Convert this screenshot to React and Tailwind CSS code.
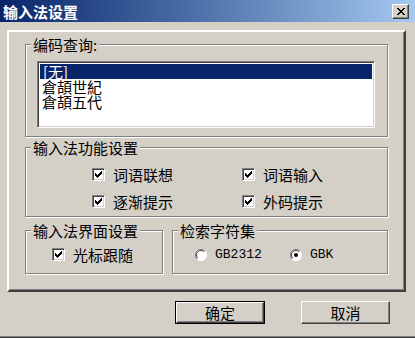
import React from "react";

const CN = "font-['Noto_Sans_CJK_SC','Liberation_Sans',sans-serif]";

function Check() {
    return (
        <span className="relative inline-block w-[13px] h-[13px] bg-white border border-t-[#808080] border-l-[#808080] border-b-white border-r-white shadow-[inset_1px_1px_0_#404040,inset_-1px_-1px_0_#d4d0c8]">
            <svg width="7" height="7" viewBox="0 0 7 7" className="absolute left-[2px] top-[2px]" shapeRendering="crispEdges">
                <path fill="#000" d="M6 0h1v1h-1z M5 1h2v1h-2z M0 2h1v1h-1z M4 2h3v1h-3z M0 3h2v1h-2z M3 3h3v1h-3z M0 4h5v1h-5z M1 5h3v1h-3z M2 6h1v1h-1z" />
            </svg>
        </span>
    );
}

function Radio({ on }) {
    return (
        <svg width="12" height="12" viewBox="0 0 12 12">
            <circle cx="6" cy="6" r="5.5" fill="#fff" />
            <path d="M10 2 A5.5 5.5 0 0 0 2 10" stroke="#808080" strokeWidth="1" fill="none" />
            <path d="M9.2 2.8 A4.5 4.5 0 0 0 2.8 9.2" stroke="#404040" strokeWidth="1" fill="none" />
            <path d="M2 10 A5.5 5.5 0 0 0 10 2" stroke="#ffffff" strokeWidth="1" fill="none" />
            {on && <circle cx="6" cy="6" r="2" fill="#000" />}
        </svg>
    );
}

function Group({ label, className, children }) {
    return (
        <div className={`relative border border-[#808080] shadow-[1px_1px_0_#fff,inset_1px_1px_0_#fff] ${className}`}>
            <span className="absolute -top-[8px] left-[5px] px-[2px] bg-[#d4d0c8] text-[15px] leading-[15px] text-black">{label}</span>
            {children}
        </div>
    );
}

function Item({ label }) {
    return (
        <div className="flex items-center gap-[8px]">
            <Check />
            <span className="text-[15px] leading-[15px] text-black">{label}</span>
        </div>
    );
}

export default function App() {
    return (
        <div className={`w-[415px] h-[338px] bg-[#d4d0c8] flex flex-col overflow-hidden ${CN}`}>
            {/* title bar */}
            <div className="h-[22px] flex items-center justify-between bg-linear-to-r from-[#0a246a] to-[#a6caf0]">
                <span className="pl-[3px] text-white font-bold text-[15px] leading-[15px]">输入法设置</span>
                <button className="mr-[6px] w-[17px] h-[15px] flex items-center justify-center bg-[#d4d0c8] border border-t-white border-l-white border-r-[#404040] border-b-[#404040] shadow-[inset_-1px_-1px_0_#808080]">
                    <svg width="8" height="7" viewBox="0 0 8 7" shapeRendering="crispEdges">
                        <path fill="#000" d="M0 0h2v1h-2z M6 0h2v1h-2z M1 1h2v1h-2z M5 1h2v1h-2z M2 2h4v1h-4z M3 3h2v1h-2z M2 4h4v1h-4z M1 5h2v1h-2z M5 5h2v1h-2z M0 6h2v1h-2z M6 6h2v1h-2z" />
                    </svg>
                </button>
            </div>

            {/* main panel */}
            <div className="ml-[7px] mt-[8px] w-[399px] h-[262px] border-2 border-t-white border-l-white border-r-[#404040] border-b-[#404040] shadow-[inset_-1px_-1px_0_#808080] px-[16px] pt-[12px] flex flex-col">
                <Group label="编码查询:" className="h-[93px] pt-[16px] pl-[11px] pr-[12px]">
                    <div className="h-[67px] bg-white border border-t-[#808080] border-l-[#808080] border-b-white border-r-white shadow-[inset_1px_1px_0_#404040,inset_-1px_-1px_0_#d4d0c8] p-[2px] text-[15px] leading-[15px] text-black">
                        <div className="bg-[#0a246a] text-white pl-[3px] h-[15px]">[无]</div>
                        <div className="pl-[2px] h-[15px]">倉頡世紀</div>
                        <div className="pl-[2px] h-[15px]">倉頡五代</div>
                    </div>
                </Group>

                <Group label="输入法功能设置" className="mt-[10px] h-[70px] pt-[19px] pl-[66px]">
                    <div className="grid grid-cols-[150px_auto] gap-y-[12px]">
                        <Item label="词语联想" />
                        <Item label="词语输入" />
                        <Item label="逐渐提示" />
                        <Item label="外码提示" />
                    </div>
                </Group>

                <div className="mt-[13px] flex gap-[9px]">
                    <Group label="输入法界面设置" className="w-[138px] h-[44px] pt-[16px] pl-[26px]">
                        <Item label="光标跟随" />
                    </Group>
                    <Group label="检索字符集" className="w-[216px] h-[44px] pt-[17px] pl-[22px]">
                        <div className="flex items-center">
                            <Radio />
                            <span className="ml-[8px] w-[75px] font-['Liberation_Mono',monospace] text-[13px] leading-[13px] text-black">GB2312</span>
                            <Radio on />
                            <span className="ml-[8px] font-['Liberation_Mono',monospace] text-[13px] leading-[13px] text-black">GBK</span>
                        </div>
                    </Group>
                </div>
            </div>

            {/* buttons */}
            <div className="mt-[9px] flex justify-end gap-[36px] pr-[25px]">
                <button className="w-[90px] h-[23px] border border-black">
                    <span className="flex items-center justify-center w-full h-full border border-t-white border-l-white border-r-[#404040] border-b-[#404040] shadow-[inset_-1px_-1px_0_#808080] text-[15px] leading-[15px] text-black">确定</span>
                </button>
                <button className="w-[89px] h-[23px] flex items-center justify-center border border-t-white border-l-white border-r-[#404040] border-b-[#404040] shadow-[inset_-1px_-1px_0_#808080] text-[15px] leading-[15px] text-black">取消</button>
            </div>

            <div className="mt-auto h-[2px] border-t border-[#808080] bg-[#404040]" />
        </div>
    );
}
